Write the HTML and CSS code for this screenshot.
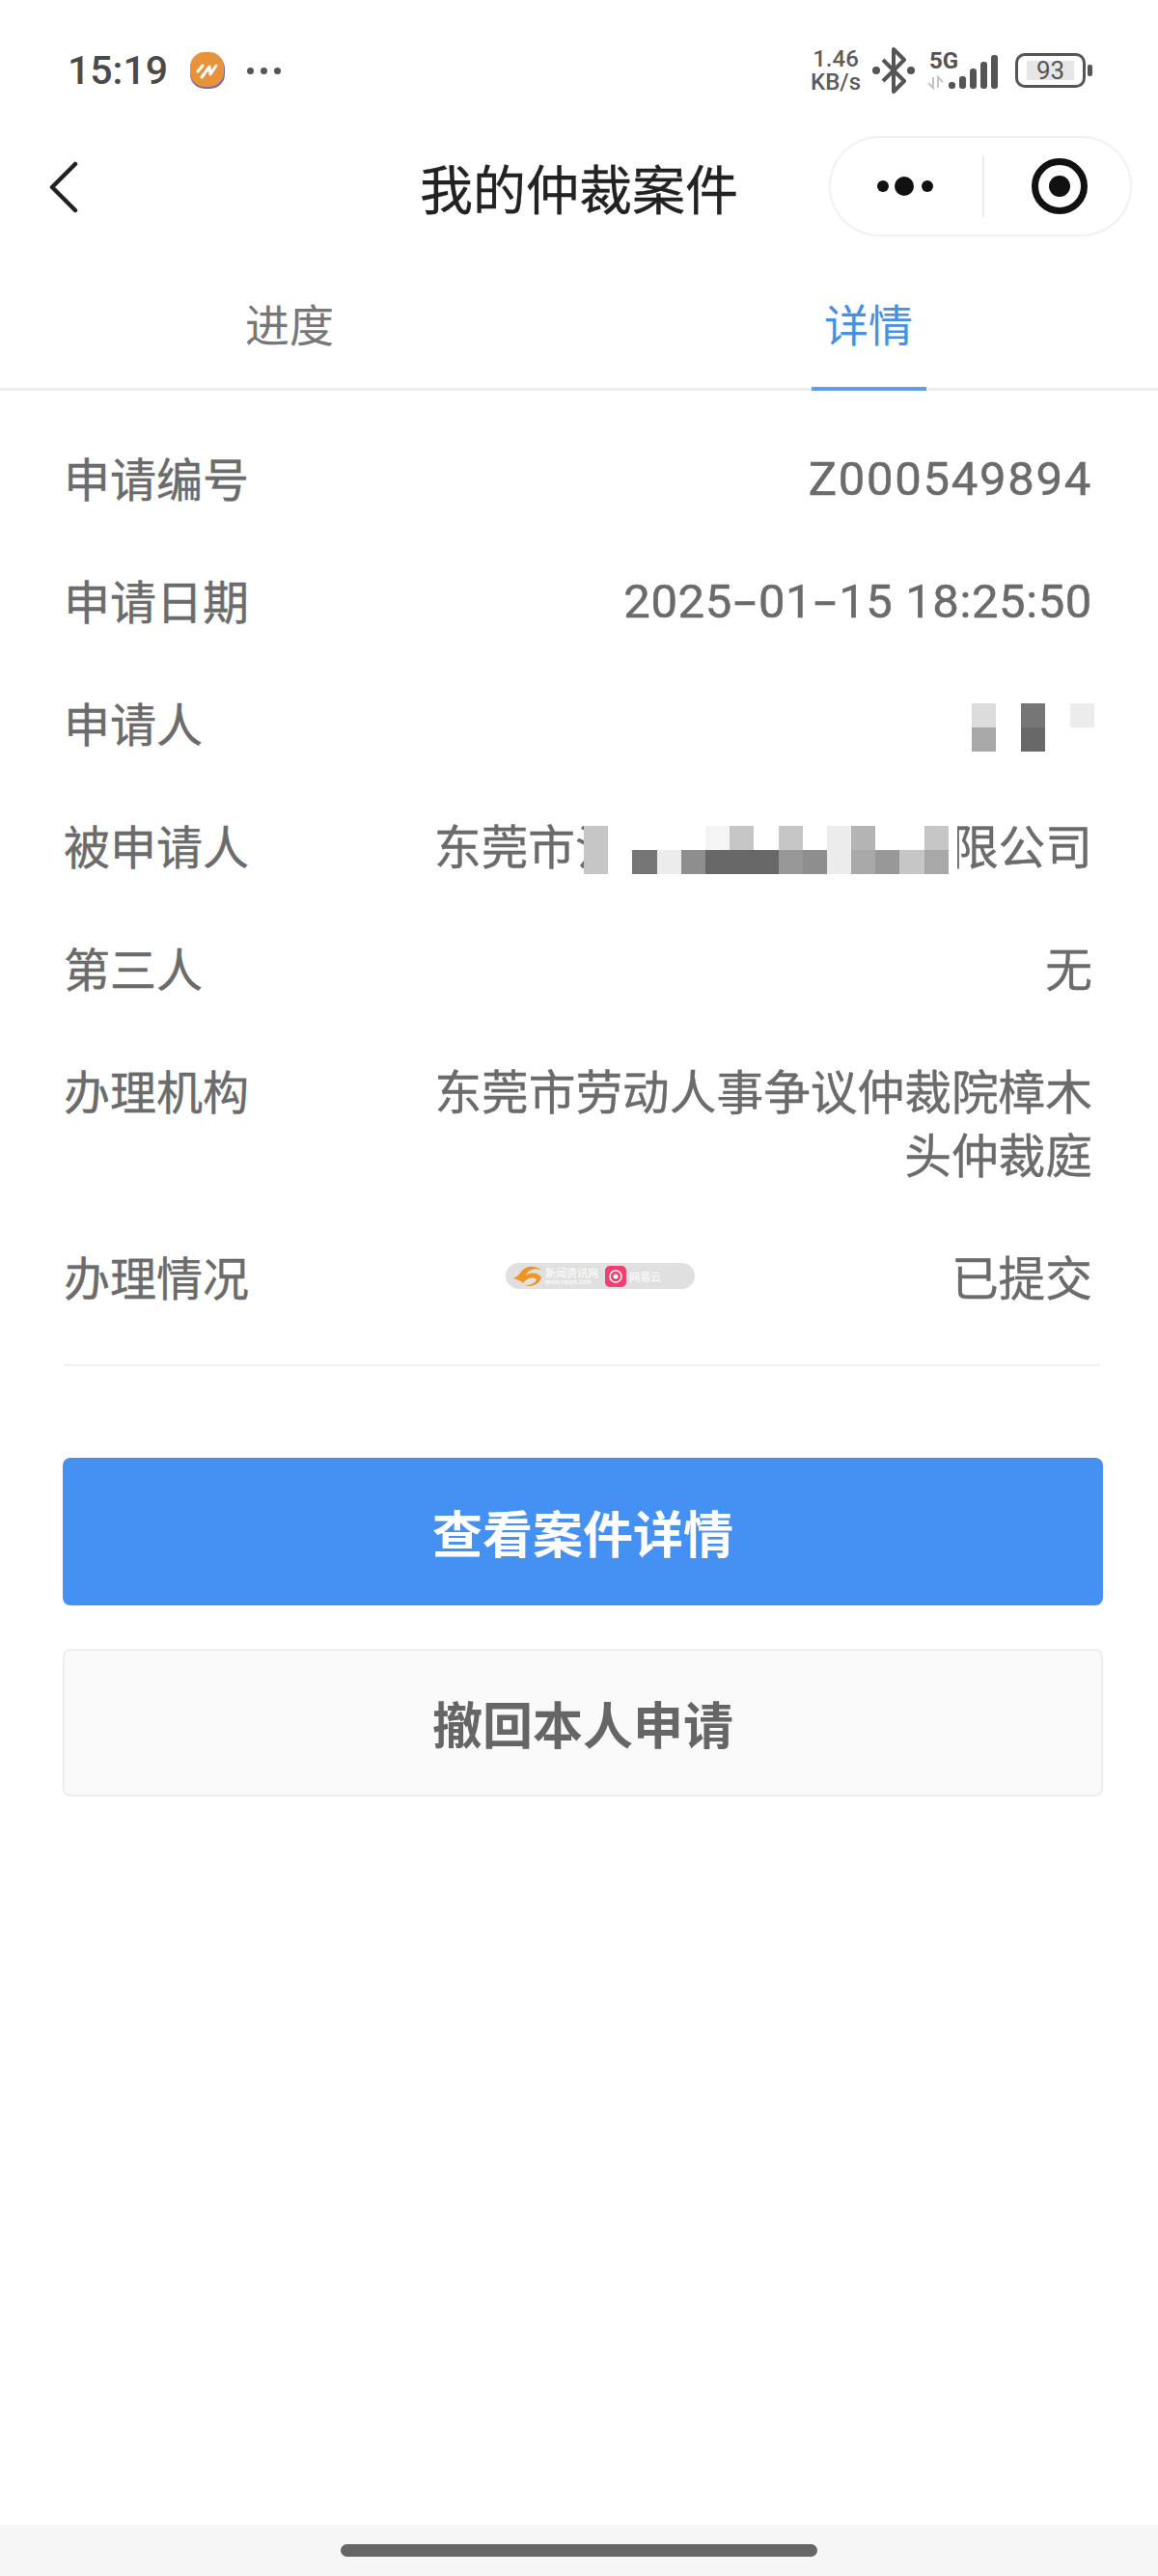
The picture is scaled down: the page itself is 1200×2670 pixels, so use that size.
FILE: index.html
```html
<!DOCTYPE html>
<html lang="zh-CN">
  <head>
    <meta charset="UTF-8" />
    <meta name="viewport" content="width=device-width, initial-scale=1.0" />
    <title>我的仲裁案件</title>
    <link rel="stylesheet" href="styles.css">
  </head>
  <body>
    <div class="status-bar">
      <div class="status-left">
        <span class="clock">15:19</span>
        <svg class="app-dot" width="40" height="40" viewBox="0 0 40 40">
          <rect x="2" y="3" width="36" height="36" rx="15" fill="#7d6aa8" />
          <rect x="2" y="1" width="35" height="36" rx="15" fill="#e8923a" />
          <path d="M10 21l5-6M14 27l8-11 1 8 6-9" fill="none" stroke="#fff" stroke-width="3" stroke-linecap="round" stroke-linejoin="round" />
        </svg>
        <span class="more-dots"><i></i><i></i><i></i></span>
      </div>
      <div class="status-right">
        <div class="net-speed">
          <span>1.46</span>
          <span>KB/s</span>
        </div>
        <svg class="bluetooth" width="48" height="48" viewBox="0 0 48 48">
          <path d="M13 13l22 22-11 11V2l11 11-22 22" fill="none" stroke="#555" stroke-width="4" stroke-linejoin="round" />
          <circle cx="6" cy="24" r="4" fill="#555" />
          <circle cx="42" cy="24" r="4" fill="#555" />
        </svg>
        <svg class="signal" width="74" height="50" viewBox="0 -8 74 50">
          <text x="3" y="19" class="signal-text">5G</text>
          <path d="M7 28v11l-5-5M12 39V28l5 5" fill="none" stroke="#c4c4c4" stroke-width="2" />
          <rect x="23" y="33" width="7" height="7" rx="3" fill="#555" />
          <rect x="34" y="27" width="7" height="13" rx="3" fill="#555" />
          <rect x="45" y="19" width="7" height="21" rx="3" fill="#555" />
          <rect x="56" y="12" width="7" height="28" rx="3" fill="#555" />
          <rect x="67" y="5" width="7" height="35" rx="3" fill="#555" />
        </svg>
        <div class="battery">
          <div class="battery-box"><span class="battery-level">93</span></div>
          <div class="battery-tip"></div>
        </div>
      </div>
    </div>

    <div class="nav-bar">
      <svg class="back-icon" width="30" height="54" viewBox="0 0 30 54">
        <path d="M27 3L3 27l24 24" fill="none" stroke="#222" stroke-width="4.5" stroke-linecap="round" stroke-linejoin="round" />
      </svg>
      <h1 class="nav-title">我的仲裁案件</h1>
      <div class="capsule">
        <svg width="70" height="24" viewBox="0 0 70 24">
          <circle cx="8" cy="12" r="6" fill="#111" />
          <circle cx="30" cy="12" r="10" fill="#111" />
          <circle cx="54" cy="12" r="6" fill="#111" />
        </svg>
        <div class="capsule-line"></div>
        <svg width="60" height="60" viewBox="0 0 60 60">
          <circle cx="30" cy="30" r="25.5" fill="none" stroke="#111" stroke-width="7" />
          <circle cx="30" cy="30" r="11" fill="#111" />
        </svg>
      </div>
    </div>

    <div class="tabs">
      <div class="tab">进度</div>
      <div class="tab tab-active">详情</div>
    </div>

    <div class="info-list">
      <div class="info-row">
        <span class="info-label">申请编号</span>
        <span class="info-value latin">Z000549894</span>
      </div>
      <div class="info-row">
        <span class="info-label">申请日期</span>
        <span class="info-value latin date">2025<span class="dash">-</span>01<span class="dash">-</span>15 18:25:50</span>
      </div>
      <div class="info-row">
        <span class="info-label">申请人</span>
        <div class="mosaic mosaic-name">
          <i class="s2"></i><i></i><i class="s8"></i><i></i><i class="s1"></i>
          <i class="s5"></i><i></i><i class="s9"></i><i></i><i></i>
        </div>
      </div>
      <div class="info-row">
        <span class="info-label">被申请人</span>
        <div class="info-value company">
          <span>东莞市氵</span>
          <span>限公司</span>
          <div class="mosaic mosaic-company">
            <i class="s3"></i><i></i><i></i><i></i><i></i><i class="s0"></i><i class="s3"></i><i></i><i class="s3"></i><i></i><i class="s1"></i><i class="s4"></i><i></i><i></i><i class="s3"></i><i class="cover"></i>
            <i class="s3"></i><i></i><i class="s8"></i><i class="s1"></i><i class="s7"></i><i class="s9"></i><i class="s9"></i><i class="s9"></i><i class="s6"></i><i class="s7"></i><i class="s1"></i><i class="s5"></i><i class="s6"></i><i class="s3"></i><i class="s5"></i>
          </div>
        </div>
      </div>
      <div class="info-row">
        <span class="info-label">第三人</span>
        <span class="info-value">无</span>
      </div>
      <div class="info-row">
        <span class="info-label">办理机构</span>
        <span class="info-value">东莞市劳动人事争议仲裁院樟木头仲裁庭</span>
      </div>
      <div class="info-row">
        <span class="info-label">办理情况</span>
        <span class="info-value">已提交</span>
        <div class="watermark">
          <svg width="32" height="25" viewBox="0 0 32 25">
            <path d="M1 15C6 14 8 11 11 7 15 2 24 1 31 6 24 4 17 6 15 12 20 8 28 9 31 14 29 21 21 25 14 22 20 22 25 20 26 16 22 13 15 15 12 20 9 17 6 16 1 15z" fill="#ee9526" />
          </svg>
          <div class="watermark-text">
            <span>新闻资讯网</span>
            <small>www.news.com</small>
          </div>
          <svg class="watermark-app" width="22" height="22" viewBox="0 0 22 22">
            <rect width="22" height="22" rx="5" fill="#f0406f" />
            <circle cx="11" cy="11" r="6" fill="none" stroke="#fff" stroke-width="1.5" />
            <circle cx="11" cy="11" r="2.5" fill="#fff" />
          </svg>
          <div class="watermark-text">
            <span>网易云</span>
          </div>
        </div>
      </div>
    </div>

    <div class="actions">
      <button class="btn btn-primary">查看案件详情</button>
      <button class="btn btn-plain">撤回本人申请</button>
    </div>

    <div class="home-bar"><div class="home-pill"></div></div>
  </body>
</html>
```

FILE: styles.css
```css
* {
  box-sizing: border-box;
  margin: 0;
  padding: 0;
}

body {
  width: 1200px;
  height: 2670px;
  background-color: #fff;
  display: flex;
  flex-direction: column;
  font-family: "Noto Sans CJK SC", "Noto Sans", sans-serif;
  color: #666;
  overflow: hidden;
}

/* status bar */
.status-bar {
  height: 127px;
  padding: 19px 68px 0 70px;
  display: flex;
  justify-content: space-between;
  align-items: center;
}

.status-left {
  display: flex;
  align-items: center;
}

.clock {
  font-family: Roboto, sans-serif;
  font-size: 41px;
  font-weight: 500;
  color: #4a4a4a;
}

.app-dot {
  margin-left: 21px;
}

.more-dots {
  display: flex;
  gap: 7px;
  margin-left: 21px;
}

.more-dots i {
  width: 7px;
  height: 7px;
  border-radius: 50%;
  background-color: #555;
}

.status-right {
  display: flex;
  align-items: center;
}

.net-speed {
  width: 58px;
  display: flex;
  flex-direction: column;
  align-items: center;
  font-family: Roboto, sans-serif;
  font-size: 24px;
  font-weight: 500;
  line-height: 24px;
  color: #5c5c5c;
}

.bluetooth {
  margin-left: 7px;
}

.signal {
  margin-left: 10px;
  margin-top: -8px;
}

.signal-text {
  font-family: Roboto, sans-serif;
  font-size: 24px;
  font-weight: 700;
  fill: #555;
}

.battery {
  margin-left: 18px;
  display: flex;
  align-items: center;
  gap: 2px;
}

.battery-box {
  width: 73px;
  height: 36px;
  padding: 5px 9px;
  border: 3px solid #555;
  border-radius: 10px;
}

.battery-level {
  display: block;
  height: 100%;
  background-color: #e6e6e6;
  font-family: Roboto, sans-serif;
  font-size: 26px;
  line-height: 20px;
  text-align: center;
  color: #555;
}

.battery-tip {
  width: 5px;
  height: 12px;
  border-radius: 2px;
  background-color: #555;
}

/* nav bar */
.nav-bar {
  height: 132px;
  padding: 0 27px;
  display: grid;
  grid-template-columns: 1fr auto 1fr;
  align-items: center;
}

.back-icon {
  margin-left: 24px;
  margin-top: 2px;
}

.nav-title {
  font-size: 55px;
  line-height: 70px;
  font-weight: 400;
  color: #222;
  -webkit-text-stroke: 0.3px #222;
}

.capsule {
  justify-self: end;
  width: 314px;
  height: 104px;
  padding: 0 43px 0 46px;
  border: 2px solid #f1f1f1;
  border-radius: 52px;
  display: flex;
  align-items: center;
  justify-content: space-between;
}

.capsule-line {
  width: 2px;
  height: 64px;
  margin-left: -8px;
  background-color: #ececec;
}

/* tabs */
.tabs {
  height: 146px;
  border-bottom: 3px solid #ececec;
  display: flex;
}

.tab {
  flex: 1;
  display: flex;
  align-items: center;
  justify-content: center;
  padding-top: 6px;
  font-size: 46px;
  color: #777;
}

.tab-active {
  position: relative;
  color: #4a90e2;
}

.tab-active::after {
  content: "";
  position: absolute;
  left: 241px;
  bottom: -3px;
  width: 119px;
  height: 4px;
  background-color: #5f9fe6;
}

/* info rows */
.info-list {
  margin: 56px 60px 0 66px;
  padding-bottom: 59px;
  border-bottom: 2px solid #f0f0f0;
}

.info-row {
  position: relative;
  display: flex;
  justify-content: space-between;
  padding-right: 8px;
  margin-bottom: 61px;
  font-size: 48px;
  line-height: 66px;
  color: #6b6b6b;
  -webkit-text-stroke: 0.4px #6b6b6b;
}

.info-row:last-child {
  margin-bottom: 0;
}

.info-value {
  max-width: 682px;
  font-size: 48.7px;
  text-align: right;
}

.latin {
  padding-top: 3px;
  margin-bottom: -3px;
  font-family: Roboto, sans-serif;
  font-size: 49px;
  font-weight: 400;
  letter-spacing: 1.7px;
  -webkit-text-stroke: 0.5px #6b6b6b;
}

.date {
  letter-spacing: 0.6px;
}

.dash {
  display: inline-block;
  width: 27px;
  text-align: center;
  transform: scaleX(1.7);
}

.company {
  position: relative;
  width: 682px;
  display: flex;
  justify-content: space-between;
}

/* blurred name blocks */
.mosaic {
  display: grid;
  grid-auto-rows: 25px;
}

.mosaic i {
  display: block;
}

.mosaic-name {
  grid-template-columns: repeat(5, 25.4px);
  height: 50px;
  margin-right: -2px;
  margin-top: 14px;
}

.mosaic-company {
  position: absolute;
  left: 155px;
  top: 14px;
  grid-template-columns: repeat(15, 25.2px) 9px;
}

.mosaic .cover {
  grid-row: 1 / 3;
  grid-column: 16;
  background-color: #fff;
}

.s0 { background-color: #f5f5f5; }
.s1 { background-color: #ececec; }
.s2 { background-color: #dcdcdc; }
.s3 { background-color: #c6c6c6; }
.s4 { background-color: #b4b4b4; }
.s5 { background-color: #a8a8a8; }
.s6 { background-color: #989898; }
.s7 { background-color: #8e8e8e; }
.s8 { background-color: #767676; }
.s9 { background-color: #686868; }

/* pasted watermark */
.watermark {
  position: absolute;
  left: 458px;
  top: 20px;
  width: 196px;
  height: 27px;
  padding: 0 6px;
  border-radius: 14px;
  background-color: #e0e0e0;
  display: flex;
  align-items: center;
  gap: 3px;
  color: #fff;
  -webkit-text-stroke: 0;
}

.watermark-text {
  display: flex;
  flex-direction: column;
  font-size: 11px;
  line-height: 12px;
}

.watermark-text small {
  font-family: "Liberation Sans", sans-serif;
  font-size: 7px;
  line-height: 8px;
}

.watermark-app {
  margin-left: 4px;
}

/* buttons */
.actions {
  margin: 95px 57px 0 65px;
  display: flex;
  flex-direction: column;
  gap: 45px;
}

.btn {
  height: 153px;
  border-radius: 8px;
  border: none;
  font-family: inherit;
  font-size: 52px;
  font-weight: 700;
}

.btn-primary {
  background-color: #4590f3;
  color: #fff;
}

.btn-plain {
  background-color: #fafafa;
  border: 2px solid #eee;
  color: #666;
}

/* home indicator */
.home-bar {
  margin-top: auto;
  height: 53px;
  background-color: #f6f6f6;
  display: flex;
  align-items: center;
  justify-content: center;
}

.home-pill {
  width: 494px;
  height: 13px;
  border-radius: 7px;
  background-color: #666;
}
```
